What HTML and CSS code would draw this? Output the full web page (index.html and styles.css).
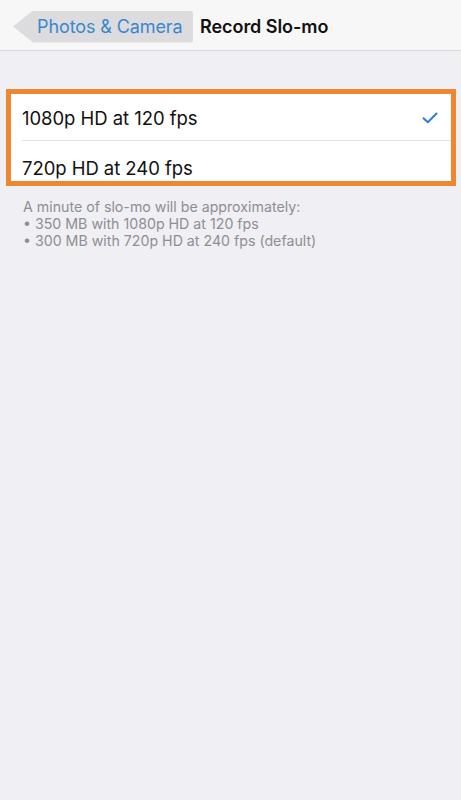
FILE: index.html
```html
<!DOCTYPE html>
<html>
<head>
<meta charset="utf-8">
<link rel="stylesheet" href="styles.css">
</head>
<body>
<header class="nav">
  <div class="back"><span class="back-label">Photos &amp; Camera</span></div>
  <div class="title">Record Slo-mo</div>
</header>
<main class="content">
  <section class="group">
    <div class="row row-first">
      <span class="row-label">1080p HD at 120 fps</span>
      <svg class="check" width="16" height="12" viewBox="0 0 16 12"><path d="M1.5 6.2 L5.8 10.2 L14.5 1.5" fill="none" stroke="#2a7fd4" stroke-width="2" stroke-linecap="round" stroke-linejoin="round"/></svg>
    </div>
    <div class="row row-second">
      <span class="row-label">720p HD at 240 fps</span>
    </div>
  </section>
  <p class="footer">A minute of slo-mo will be approximately:<br>• 350 MB with 1080p HD at 120 fps<br>• 300 MB with 720p HD at 240 fps (default)</p>
</main>
</body>
</html>
```
FILE: styles.css
```css
html, body {
  margin: 0;
  padding: 0;
}
body {
  width: 461px;
  height: 800px;
  background: #efeff4;
  font-family: Inter, "Liberation Sans", sans-serif;
  overflow: hidden;
}
.nav {
  height: 50px;
  background: #f7f7f7;
  border-bottom: 1px solid #d9d9dc;
  display: flex;
  align-items: center;
}
.back {
  margin-left: 13px;
  margin-top: 3px;
  width: 180px;
  height: 32px;
  background: #dcdcde;
  clip-path: polygon(0 50%, 20px 0, 100% 0, 100% 100%, 20px 100%);
  border-radius: 0 3px 3px 0;
  display: flex;
  align-items: center;
  box-sizing: border-box;
  padding-left: 24px;
}
.back-label {
  color: #3b87cf;
  font-size: 18px;
  letter-spacing: -0.1px;
}
.title {
  margin-left: 7px;
  margin-top: 3px;
  font-size: 18px;
  font-weight: 600;
  color: #111;
  letter-spacing: -0.05px;
}
.content {
  padding-top: 38px;
}
.group {
  margin: 0 5px 0 6px;
  border: 5px solid #ef8632;
  background: #fff;
}
.row {
  display: flex;
  align-items: center;
  padding-left: 11px;
  box-sizing: border-box;
}
.row-first {
  height: 47px;
  position: relative;
}
.row-first::after {
  content: "";
  position: absolute;
  left: 11px;
  right: 0;
  bottom: 0;
  height: 1px;
  background: #e4e4e8;
}
.row-second {
  height: 40px;
  padding-top: 13px;
}
.row-label {
  font-size: 18.5px;
  color: #111;
  letter-spacing: -0.05px;
  flex: 1;
}
.check {
  margin-right: 13px;
  margin-top: 1px;
}
.footer {
  margin: 12px 0 0 23px;
  font-size: 14.2px;
  line-height: 17px;
  color: #8e8e93;
}
```
